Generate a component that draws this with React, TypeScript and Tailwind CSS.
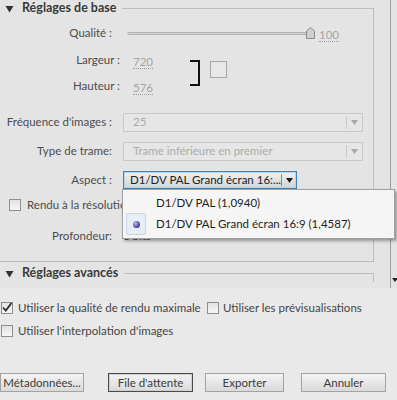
const font = { fontFamily: 'Lato, "Open Sans", sans-serif' };

function Tri() {
  return (
    <svg width="9" height="8" viewBox="0 0 9 8" className="shrink-0">
      <path d="M0.5 1 L8.5 1 L4.5 7.5 Z" fill="#333" />
    </svg>
  );
}

function SectionHeader({ title }: { title: string }) {
  return (
    <div className="flex h-[17px] items-center">
      <div className="w-[5px]" />
      <Tri />
      <span className="ml-[8px] mr-[6px] whitespace-nowrap text-[12.5px] font-bold text-[#3a3a3a]">{title}</span>
      <div className="mt-[8px] flex-1 self-stretch border-t border-r border-[#bdbdbd]" />
    </div>
  );
}

function Label({ w, children }: { w: string; children: React.ReactNode }) {
  return <div className={`${w} shrink-0 whitespace-nowrap text-right text-[11.5px] text-[#4c4c4c]`}>{children}</div>;
}

function Value({ children }: { children: React.ReactNode }) {
  return (
    <span className="border-b border-dotted border-[#9a9a9a] leading-[13px] text-[11.5px] text-[#a4a4a4]">
      {children}
    </span>
  );
}

function Select({ text }: { text: string }) {
  return (
    <div className="ml-[11px] flex h-[19px] w-[240px] items-center border border-[#c9c9c9] bg-[#e6e6e6]">
      <span className="flex-1 truncate pl-[9px] text-[11.5px] text-[#ababab]">{text}</span>
      <div className="flex h-[13px] w-[16px] items-center justify-center border-l border-[#c9c9c9]">
        <svg width="7" height="5" viewBox="0 0 7 5">
          <path d="M0 0 L7 0 L3.5 5 Z" fill="#a8a8a8" />
        </svg>
      </div>
    </div>
  );
}

function Check({ checked }: { checked?: boolean }) {
  return (
    <div className="relative h-[12px] w-[12px] shrink-0 border border-[#8e8e8e] bg-gradient-to-b from-[#e2e2e2] to-[#f6f6f6]">
      {checked && (
        <svg width="12" height="12" viewBox="0 0 12 12" className="absolute -left-px -top-[2px]">
          <path d="M2 6.5 L4.8 9.5 L10.5 2" stroke="#2b2b2b" strokeWidth="1.8" fill="none" />
        </svg>
      )}
    </div>
  );
}

function Button({ label, primary }: { label: string; primary?: boolean }) {
  return (
    <div
      className={`flex h-[19px] items-center justify-center whitespace-nowrap border bg-gradient-to-b from-[#f4f4f4] to-[#dadada] text-[11.5px] text-[#3c3c3c] ${
        primary ? 'border-[#4a4a4a] shadow-[inset_0_0_0_1px_#cfcfcf]' : 'border-[#a3a3a3]'
      }`}
    >
      {label}
    </div>
  );
}

export default function App() {
  return (
    <div className="relative h-[400px] w-[397px] overflow-hidden bg-[#e9e9e9]" style={font}>
      {/* scroll area */}
      <div className="flex h-[288px] bg-[#e4e4e4]">
        <div className="flex-1">
          <div className="mr-[16px]">
            <SectionHeader title="Réglages de base" />
            <div className="flex flex-col border-r border-b border-[#bdbdbd] pt-[3px] pb-[12px]">
              {/* Qualité */}
              <div className="flex h-[26px] items-center">
                <Label w="w-[112px]">Qualité :</Label>
                <div className="ml-[15px] flex items-center">
                  <div className="h-[3px] w-[181px] rounded-sm border border-[#b4b4b4] bg-[#d2d2d2]" />
                  <svg width="9" height="12" viewBox="0 0 9 12" className="-ml-[2px]">
                    <path d="M0.5 4 L4.5 0.5 L8.5 4 L8.5 11.5 L0.5 11.5 Z" fill="#d0d0d0" stroke="#8a8a8a" />
                  </svg>
                  <span className="ml-[4px]">
                    <Value>100</Value>
                  </span>
                </div>
              </div>
              {/* Largeur / Hauteur */}
              <div className="mt-px flex items-center">
                <div className="flex flex-col">
                  <div className="flex h-[26px] items-center">
                    <Label w="w-[120px]">Largeur :</Label>
                    <span className="ml-[13px]">
                      <Value>720</Value>
                    </span>
                  </div>
                  <div className="flex h-[26px] items-center">
                    <Label w="w-[120px]">Hauteur :</Label>
                    <span className="ml-[13px]">
                      <Value>576</Value>
                    </span>
                  </div>
                </div>
                <div className="ml-[37px] h-[26px] w-[10px] border-y-2 border-r-2 border-[#111]" />
                <div className="ml-[10px] -mt-[8px] h-[17px] w-[17px] border border-[#a6a6a6] bg-[#e8e8e8]" />
              </div>
              {/* Fréquence */}
              <div className="mt-[10px] flex h-[26px] items-center">
                <Label w="w-[112px]">Fréquence d'images :</Label>
                <Select text="25" />
              </div>
              <div className="mt-[3px] flex h-[26px] items-center">
                <Label w="w-[112px]">Type de trame:</Label>
                <Select text="Trame inférieure en premier" />
              </div>
              {/* Aspect */}
              <div className="mt-[3px] flex h-[26px] items-center">
                <Label w="w-[112px]">Aspect :</Label>
                <div className="ml-[11px] flex h-[18px] w-[174px] items-center border border-[#3f84b8] bg-gradient-to-b from-[#f1f1f1] to-[#d4d4d4] shadow-[inset_0_0_0_1px_#b9d3e6]">
                  <span className="flex-1 whitespace-nowrap pl-[6px] text-[11.5px] text-[#222]">
                    D1/DV PAL Grand écran 16:...
                  </span>
                  <div className="flex h-[12px] w-[16px] items-center justify-center border-l border-[#8a8a8a]">
                    <svg width="7" height="5" viewBox="0 0 7 5">
                      <path d="M0 0 L7 0 L3.5 5 Z" fill="#1e1e1e" />
                    </svg>
                  </div>
                </div>
              </div>
              {/* Rendu */}
              <div className="flex h-[24px] items-center pl-[9px]">
                <Check />
                <span className="ml-[6px] w-[95px] overflow-hidden whitespace-nowrap text-[11.5px] text-[#4c4c4c]">
                  Rendu à la résolution maximale
                </span>
              </div>
              {/* Profondeur */}
              <div className="mt-[6px] flex h-[26px] items-center">
                <Label w="w-[112px]">Profondeur:</Label>
                <span className="ml-[11px] text-[11.5px] text-[#4c4c4c]">8 bits</span>
              </div>
            </div>
            <div className="mt-[3px]">
              <SectionHeader title="Réglages avancés" />
            </div>
          </div>
        </div>
        {/* scrollbar strip */}
        <div className="flex w-[7px] flex-col justify-end border-l border-[#9c9c9c] pb-[6px]">
          <svg width="6" height="4" viewBox="0 0 6 4" className="ml-px">
            <path d="M0 0 L6 0 L3 4 Z" fill="#222" />
          </svg>
        </div>
      </div>

      {/* bottom options */}
      <div className="flex flex-col pl-px pt-[14px]">
        <div className="flex h-[12px] items-center">
          <div className="flex w-[206px] items-center">
            <Check checked />
            <span className="ml-[5px] whitespace-nowrap text-[11.5px] text-[#444]">
              Utiliser la qualité de rendu maximale
            </span>
          </div>
          <Check />
          <span className="ml-[4px] whitespace-nowrap text-[11.5px] text-[#444]">Utiliser les prévisualisations</span>
        </div>
        <div className="mt-[11px] flex h-[12px] items-center">
          <Check />
          <span className="ml-[5px] whitespace-nowrap text-[11.5px] text-[#444]">Utiliser l'interpolation d'images</span>
        </div>
      </div>

      {/* buttons */}
      <div className="mt-[36px] flex items-center">
        <div className="w-[84px]">
          <Button label="Métadonnées..." />
        </div>
        <div className="ml-[24px] w-[85px]">
          <Button label="File d'attente" primary />
        </div>
        <div className="ml-[12px] w-[79px]">
          <Button label="Exporter" />
        </div>
        <div className="ml-[17px] w-[85px]">
          <Button label="Annuler" />
        </div>
      </div>

      {/* open dropdown menu */}
      <div className="absolute left-[122px] top-[189px] w-[273px] border border-[#a0a0a0] bg-[#f5f5f5] py-[3px] shadow-[2px_2px_3px_rgba(0,0,0,0.35)]">
        <div className="flex h-[20px] items-center">
          <div className="w-[33px]" />
          <span className="text-[11.5px] text-[#1e1e1e]">D1/DV PAL (1,0940)</span>
        </div>
        <div className="flex h-[22px] items-center">
          <div className="ml-[3px] flex h-[22px] w-[20px] items-center justify-center rounded-[2px] border border-[#c9d3e3] bg-[#e9edf5]">
            <div className="h-[7px] w-[7px] rounded-full bg-[radial-gradient(circle_at_35%_35%,#b9bbf0,#3a3d9a_70%)]" />
          </div>
          <span className="ml-[10px] text-[11.5px] text-[#1e1e1e]">D1/DV PAL Grand écran 16:9 (1,4587)</span>
        </div>
      </div>
    </div>
  );
}
